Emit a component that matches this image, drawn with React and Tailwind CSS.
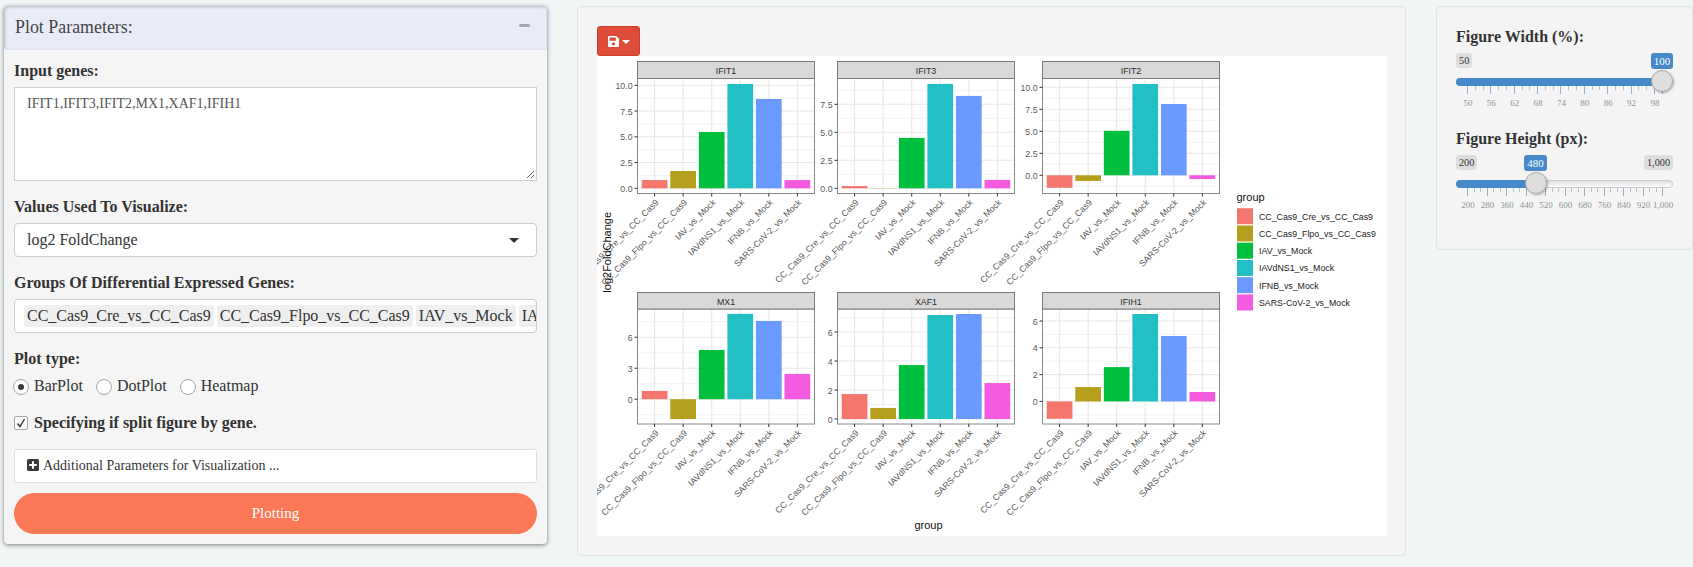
const SERIF = "font-['Liberation_Serif',serif]";
const GROUPS = [
  ['CC_Cas9_Cre_vs_CC_Cas9', '#f5766d'],
  ['CC_Cas9_Flpo_vs_CC_Cas9', '#b69f1c'],
  ['IAV_vs_Mock', '#00be3e'],
  ['IAVdNS1_vs_Mock', '#22bfc4'],
  ['IFNB_vs_Mock', '#6a99ff'],
  ['SARS-CoV-2_vs_Mock', '#f55be0'],
];

const FACETS = [
  { name: 'IFIT1', x: 40.5, top: 5.5, zero: 132.3, unit: 10.3, ticks: ['0.0', '2.5', '5.0', '7.5', '10.0'], minor: [1.25, 3.75, 6.25, 8.75], v: [0.8, 1.68, 5.47, 10.13, 8.67, 0.8] },
  { name: 'IFIT3', x: 240.5, top: 5.5, zero: 132.3, unit: 11.2, ticks: ['0.0', '2.5', '5.0', '7.5'], minor: [1.25, 3.75, 6.25, 8.75], v: [0.2, 0.02, 4.5, 9.32, 8.25, 0.75] },
  { name: 'IFIT2', x: 445.5, top: 5.5, zero: 119.3, unit: 8.8, ticks: ['0.0', '2.5', '5.0', '7.5', '10.0'], minor: [-1.25, 1.25, 3.75, 6.25, 8.75], v: [-1.42, -0.64, 5.05, 10.38, 8.1, -0.42] },
  { name: 'MX1', x: 40.5, top: 236.5, zero: 343.2, unit: 10.33, ticks: ['0', '3', '6'], minor: [-1.5, 1.5, 4.5, 7.5], v: [0.8, -1.92, 4.77, 8.26, 7.58, 2.45] },
  { name: 'XAF1', x: 240.5, top: 236.5, zero: 363, unit: 14.5, ticks: ['0', '2', '4', '6'], minor: [1, 3, 5, 7], v: [1.72, 0.76, 3.72, 7.17, 7.24, 2.48] },
  { name: 'IFIH1', x: 445.5, top: 236.5, zero: 345.4, unit: 13.4, ticks: ['0', '2', '4', '6'], minor: [-1, 1, 3, 5], v: [-1.3, 1.07, 2.56, 6.52, 4.88, 0.7] },
];

function Facet({ f }) {
  const w = 177;
  const strip = f.top > 200 ? 16.5 : 17;
  const y0 = f.top + strip;
  const y1 = f.top + (f.top > 200 ? 131.5 : 132);
  const cx = (i) => f.x + 17.1 + 28.55 * i;
  const y = (v) => f.zero - v * f.unit;
  return (
    <g>
      {f.minor.map((m) => (
        <line key={m} x1={f.x} x2={f.x + w} y1={y(m)} y2={y(m)} stroke="#efefef" strokeWidth="0.8" />
      ))}
      {f.ticks.map((t) => (
        <line key={t} x1={f.x} x2={f.x + w} y1={y(+t)} y2={y(+t)} stroke="#e8e8e8" strokeWidth="1.1" />
      ))}
      {GROUPS.map((g, i) => (
        <line key={g[0]} x1={cx(i)} x2={cx(i)} y1={y0} y2={y1} stroke="#e8e8e8" strokeWidth="1.1" />
      ))}
      {f.v.map((v, i) => (
        <rect key={i} x={cx(i) - 12.85} width="25.7" y={Math.min(y(v), f.zero)} height={Math.abs(v) * f.unit} fill={GROUPS[i][1]} />
      ))}
      <rect x={f.x} y={y0} width={w} height={y1 - y0} fill="none" stroke="#8a8a8a" />
      <rect x={f.x} y={f.top} width={w} height={strip} fill="#d9d9d9" stroke="#7a7a7a" />
      <text x={f.x + w / 2} y={f.top + 12.2} textAnchor="middle" fontSize="8.8" fill="#2a2a2a">{f.name}</text>
      {f.ticks.map((t) => (
        <g key={t}>
          <line x1={f.x - 3} x2={f.x} y1={y(+t)} y2={y(+t)} stroke="#333" />
          <text x={f.x - 4.9} y={y(+t) + 3.5} textAnchor="end" fontSize="8.8" fill="#5a5a5a">{t}</text>
        </g>
      ))}
      {GROUPS.map((g, i) => (
        <g key={g[0]}>
          <line x1={cx(i)} x2={cx(i)} y1={y1} y2={y1 + 3} stroke="#333" />
          <text transform={`translate(${cx(i) + 4.6} ${y1 + 9.5}) rotate(-45)`} textAnchor="end" fontSize="8.8" fill="#5a5a5a">{g[0]}</text>
        </g>
      ))}
    </g>
  );
}

function Chart() {
  return (
    <svg width="790" height="480" viewBox="0 0 790 480" className="block overflow-hidden bg-white font-['Liberation_Sans',sans-serif]">
      {FACETS.map((f) => <Facet key={f.name} f={f} />)}
      <text transform="translate(13.5 196.3) rotate(-90)" textAnchor="middle" fontSize="11" fill="#111">log2FoldChange</text>
      <text x="331.5" y="473" textAnchor="middle" fontSize="11" fill="#111">group</text>
      <text x="639.5" y="144.7" fontSize="11" fill="#111">group</text>
      {GROUPS.map(([name, color], i) => (
        <g key={name}>
          <rect x="640" y={152.2 + 17.25 * i} width="16" height="16" fill={color} />
          <text x="662" y={163.6 + 17.25 * i} fontSize="8.8" fill="#1a1a1a">{name}</text>
        </g>
      ))}
    </svg>
  );
}

function Slider({ min, max, showMax, value, pos, valueBox, labels, marks, smalls }) {
  return (
    <svg width="222" height="58" viewBox="0 0 222 58" className="block overflow-visible font-['Liberation_Serif',serif]">
      <defs>
        <linearGradient id="track" x1="0" y1="0" x2="0" y2="1">
          <stop offset="0" stopColor="#dedede" />
          <stop offset="1" stopColor="#fff" />
        </linearGradient>
        <filter id="knob" x="-30%" y="-30%" width="170%" height="170%">
          <feDropShadow dx="1" dy="1" stdDeviation="1.3" floodColor="#000" floodOpacity="0.3" />
        </filter>
      </defs>
      <rect x="0" y="0" width={min === '50' ? 16 : 21} height="15" rx="3" fill="#dedede" />
      <text x={min === '50' ? 8.2 : 10.7} y="10.8" textAnchor="middle" fontSize="10.3" fill="#333">{min}</text>
      {showMax && <rect x="188" y="0" width="29" height="15" rx="3" fill="#dedede" />}
      {showMax && <text x="202.5" y="10.8" textAnchor="middle" fontSize="10.3" fill="#333">{max}</text>}
      <rect x={valueBox[0]} y="0" width={valueBox[1]} height="16" rx="3" fill="#4689c8" />
      <text x={valueBox[0] + valueBox[1] / 2} y="12" textAnchor="middle" fontSize="11" fill="#fff">{value}</text>
      <rect x="0.5" y="25.5" width="216" height="7" rx="3.5" fill="url(#track)" stroke="#ccc" />
      <path d={`M4 25H${pos}V33H4A4 4 0 0 1 4 25Z`} fill="#4689c8" />
      {smalls.map((x) => <rect key={x} x={Math.round(x)} y="33" width="1" height="4" fill="#b8c0c8" />)}
      {marks.map((x) => <rect key={x} x={Math.round(x)} y="33" width="1" height="8" fill="#8fb1d3" />)}
      {labels.map((l, i) => (
        <text key={l} x={i === 10 ? 207 : marks[i] + 1} y="53" textAnchor="middle" fontSize="9" fill="#8f949a">{l}</text>
      ))}
      <circle cx={pos} cy="28" r="10.5" fill="#dedede" stroke="#aaa" filter="url(#knob)" />
    </svg>
  );
}

const W_MARKS = [...Array.from({ length: 9 }, (_, i) => 11 + 23.37 * i), 206];
const W_SMALLS = Array.from({ length: 25 }, (_, i) => 11 + 7.79 * i).filter((_, i) => i % 3);
const H_MARKS = Array.from({ length: 11 }, (_, i) => 11 + 19.5 * i);
const H_SMALLS = Array.from({ length: 30 }, (_, i) => 11 + 6.5 * i).filter((_, i) => i % 3);

function Radio({ label, checked }) {
  return (
    <label className="flex items-center">
      <span className="mr-[5px] mt-[2px] flex size-4 items-center justify-center rounded-full border border-[#a8a8a8] bg-white">
        {checked && <span className="size-[6px] rounded-full bg-[#3a3a3a]" />}
      </span>
      {label}
    </label>
  );
}

const label = 'text-[16px] font-bold leading-[20px] whitespace-nowrap';

export default function App() {
  return (
    <div className={`flex h-[567px] w-[1693px] items-start overflow-hidden bg-[#f0f6f6] pt-[6px] text-[#333] ${SERIF}`}>
      <section className="ml-1 flex h-[538px] w-[543px] shrink-0 flex-col rounded-[4px] bg-[#f5f5f5] shadow-[0_1px_4px_rgba(0,0,0,0.5)]">
        <header className="flex h-11 shrink-0 items-start justify-between rounded-[4px] bg-[#e9ecf6] pl-[11px] pr-[17px] pt-[10px] shadow-[inset_1px_1px_3px_rgba(0,0,0,0.2)]">
          <span className="text-[17.9px] leading-[23px] text-[#444]">Plot Parameters:</span>
          <span className="mt-2 h-[3px] w-[11px] rounded-full bg-[#a0a5b8]" />
        </header>
        <div className="flex flex-col px-[10px]">
          <div className={`mt-[11px] ${label}`}>Input genes:</div>
          <div className="relative mt-[6px] h-[94px] border border-[#ccd0d4] bg-white px-3 pt-[6px] text-[14px] leading-[20px] text-[#555]">
            IFIT1,IFIT3,IFIT2,MX1,XAF1,IFIH1
            <svg className="absolute bottom-[1px] right-[1px]" width="9" height="9" viewBox="0 0 9 9" stroke="#555" strokeWidth="0.9">
              <path d="M1 8L8 1M5 8L8 5" />
            </svg>
          </div>
          <div className={`mt-[16px] ${label}`}>Values Used To Visualize:</div>
          <div className="mt-[6px] flex h-[34px] items-center justify-between rounded-[4px] border border-[#ccc] bg-white pl-3 pr-[17px] text-[16px] leading-[20px]">
            log2 FoldChange
            <span className="border-x-5 border-t-5 border-x-transparent border-t-[#333]" />
          </div>
          <div className={`mt-[16px] ${label}`}>Groups Of Differential Expressed Genes:</div>
          <div className="mt-[6px] flex h-[34px] items-start gap-[3px] overflow-hidden rounded-[4px] border border-[#ccc] bg-white pl-[9px] pt-[5px] text-[16px] leading-[22px]">
            {['CC_Cas9_Cre_vs_CC_Cas9', 'CC_Cas9_Flpo_vs_CC_Cas9', 'IAV_vs_Mock', 'IAVdNS1_vs_Mock'].map((t) => (
              <span key={t} className="h-[22px] shrink-0 rounded-[3px] bg-[#efefef] px-[3px] tracking-[-0.01px]">{t}</span>
            ))}
          </div>
          <div className={`mt-[16px] ${label}`}>Plot type:</div>
          <div className="-ml-[1px] mt-[7px] flex gap-[13px] text-[16px] leading-[20px]">
            <Radio label="BarPlot" checked />
            <Radio label="DotPlot" />
            <Radio label="Heatmap" />
          </div>
          <div className="mt-[17px] flex items-center gap-[6px]">
            <span className="flex size-[14px] items-center justify-center rounded-[2px] border border-[#a8a8a8] bg-white">
              <svg width="10" height="10" viewBox="0 0 10 10" fill="none" stroke="#333" strokeWidth="1.4"><path d="M1.5 5.5L4 8.5L8.5 1" /></svg>
            </span>
            <span className={label}>Specifying if split figure by gene.</span>
          </div>
          <div className="mt-[16px] flex h-[34px] items-center rounded-[3px] border border-[#ddd] bg-white pb-[2px] pl-3 text-[14px]">
            <svg className="mr-1" width="12" height="12" viewBox="0 0 12 12"><rect width="12" height="12" rx="1.5" fill="#3a3a3a" /><path d="M6 2.2V9.8M2.2 6H9.8" stroke="#fff" strokeWidth="2" /></svg>
            Additional Parameters for Visualization ...
          </div>
          <button className="mt-[10px] h-[41px] rounded-full bg-[#fd7856] text-[15px] text-white">Plotting</button>
        </div>
      </section>

      <section className="ml-[30px] h-[550px] w-[829px] shrink-0 rounded-[4px] border border-[#e0e3e3] bg-[#f4f4f4] pl-[19px] pt-[19px]">
        <button className="flex h-[30px] w-[43px] items-center justify-center gap-[3px] rounded-[3px] border border-[#d03d2d] bg-[#dd4b39]">
          <svg width="11" height="11" viewBox="0 0 448 448"><path fill="#fff" fillRule="evenodd" d="M434 98L350 14A48 48 0 0 0 316 0H48A48 48 0 0 0 0 48V400A48 48 0 0 0 48 448H400A48 48 0 0 0 448 400V132A48 48 0 0 0 434 98ZM224 384A64 64 0 1 1 224 256A64 64 0 0 1 224 384ZM320 80V180A12 12 0 0 1 308 192H76A12 12 0 0 1 64 180V76A12 12 0 0 1 76 64H308Z" /></svg>
          <span className="mt-[2px] border-x-4 border-t-4 border-x-transparent border-t-white" />
        </button>
        <Chart />
      </section>

      <section className="ml-[30px] h-[244px] w-[257px] shrink-0 rounded-[4px] border border-[#e0e3e3] bg-[#f4f4f4] pl-[19px] pt-[20px]">
        <div className={label}>Figure Width (%):</div>
        <div className="mt-[6px]">
          <Slider min="50" value="100" pos={206} valueBox={[195, 22]} marks={W_MARKS} smalls={W_SMALLS} labels={['50', '56', '62', '68', '74', '80', '86', '92', '98']} />
        </div>
        <div className={`mt-[18px] ${label}`}>Figure Height (px):</div>
        <div className="mt-[6px]">
          <Slider min="200" max="1,000" showMax value="480" pos={80} valueBox={[68, 23]} marks={H_MARKS} smalls={H_SMALLS} labels={['200', '280', '360', '440', '520', '600', '680', '760', '840', '920', '1,000']} />
        </div>
      </section>
    </div>
  );
}
